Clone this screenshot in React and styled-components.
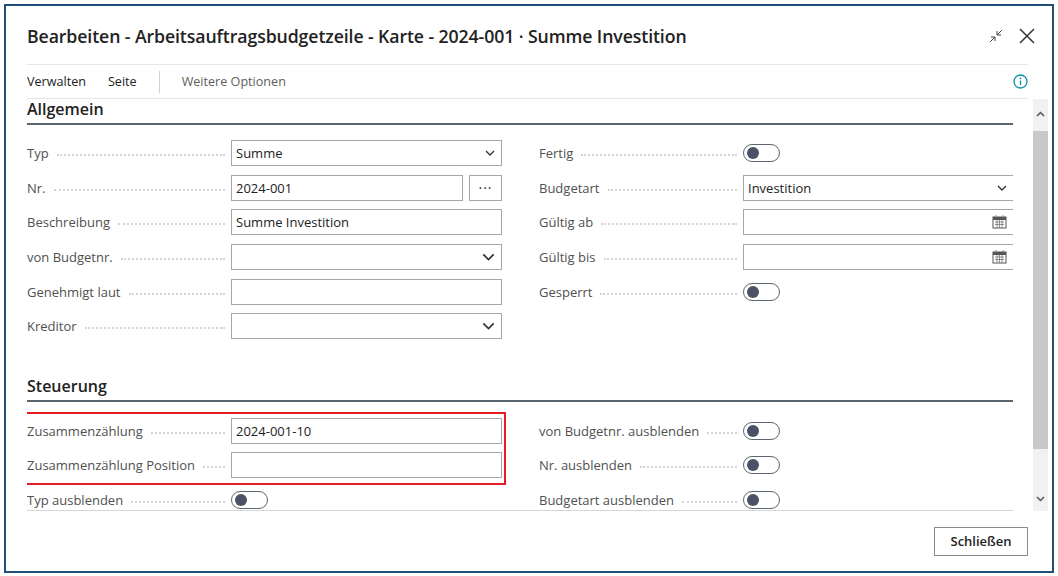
import React from "react";
import styled, { createGlobalStyle } from "styled-components";

const G = createGlobalStyle`
  html,body{margin:0;padding:0;background:#fff;}
  body{font-family:"Segoe UI","Open Sans","Noto Sans",sans-serif;}
`;
const Frame = styled.div`
  box-sizing:border-box;width:1050px;height:569px;margin:4px 0 0 4px;
  border:2px solid #1f4e79;display:flex;flex-direction:column;background:#fff;
`;
const Header = styled.div`
  display:flex;align-items:center;justify-content:space-between;
  height:59px;padding-top:2px;box-sizing:border-box;margin:0 24px 0 21px;border-bottom:1px solid #e6e6e6;
`;
const Title = styled.h1`
  margin:0;font-size:17.7px;font-weight:600;color:#222;letter-spacing:-0.1px;
`;
const Icons = styled.div`display:flex;gap:14px;align-items:center;margin-right:-8px;`;
const Bar = styled.div`
  display:flex;align-items:center;height:33px;margin:0 24px 0 21px;border-bottom:1px solid #e6e6e6;
  font-size:12.6px;color:#222;
`;
const Act = styled.span`margin-right:22px;color:${p=>p.$muted?"#605e5c":"#222"};`;
const Sep = styled.span`width:1px;height:22px;background:#d0d0d0;margin:0 22px 0 0;`;
const Body = styled.div`display:flex;height:412px;`;
const Scroll = styled.div`flex:1;overflow:hidden;padding:0 20px 0 21px;`;
const Clip = styled.div`height:411px;overflow:hidden;border-bottom:1px solid #d6d6d6;`;
const Sb = styled.div`width:15px;margin-right:4px;display:flex;flex-direction:column;align-items:center;background:#f1f1f1;`;
const Thumb = styled.div`width:15px;height:318px;background:#c8c8c8;margin-top:2px;`;
const Arrow = styled.div`height:30px;display:flex;align-items:center;justify-content:center;`;
const Section = styled.h2`
  margin:${p=>p.$top}px 0 0;font-size:16px;font-weight:600;color:#222;
  padding-bottom:3px;border-bottom:2px solid #5c6670;height:21px;line-height:21px;
`;
const Grid = styled.div`display:grid;grid-template-columns:475px 475px;column-gap:37px;padding-top:${p=>p.$pt}px;`;
const Col = styled.div`display:flex;flex-direction:column;`;
const Row = styled.div`display:flex;align-items:center;height:34.6px;`;
const Label = styled.div`
  width:204px;display:flex;align-items:center;font-size:13px;color:#505050;white-space:nowrap;overflow:hidden;
  &::after{content:"";flex:1;margin:4px 6px 0 8px;border-bottom:2px dotted #d4d4d4;height:0;}
`;
const Input = styled.div`
  box-sizing:border-box;height:26px;flex:1;
  border:1px solid #a6a6a6;display:flex;align-items:center;justify-content:space-between;
  padding:0 6px 0 4px;font-size:13px;color:#222;background:#fff;
`;
const Dots = styled.div`
  box-sizing:border-box;width:33px;height:26px;margin-left:6px;border:1px solid #a6a6a6;
  display:flex;align-items:center;justify-content:center;font-size:14px;color:#333;letter-spacing:1px;
`;
const Field = styled.div`display:flex;flex:1;`;
const Toggle = styled.div`
  box-sizing:border-box;width:37px;height:18px;border:1px solid #5c6670;border-radius:9px;
  display:flex;align-items:center;padding-left:3px;
  &::before{content:"";width:12px;height:12px;border-radius:50%;background:#4a5366;}
`;
const Highlight = styled.div`
  margin:-2px -4px -2px -6px;padding:0 2px 0 4px;border:2px solid #e51c23;
`;
const Footer = styled.div`flex:1;display:flex;justify-content:flex-end;align-items:center;padding-right:24px;`;
const Btn = styled.button`
  width:94px;height:29px;background:#fff;border:1px solid #8a8a8a;font:600 13px "Segoe UI","Open Sans",sans-serif;color:#222;
`;

const Chev = ({s=10}) => (
  <svg width={s} height={s*0.6} viewBox="0 0 10 6"><path d="M1 1l4 4 4-4" fill="none" stroke="#333" strokeWidth="1.3"/></svg>
);
const Cal = () => (
  <svg width="15" height="14" viewBox="0 0 15 14"><rect x="1" y="2" width="13" height="11" fill="none" stroke="#555"/><rect x="1" y="2" width="13" height="3" fill="#555"/>
  <path d="M4 0v3M11 0v3M3 7h9M3 9.5h9M5 5v8M7.5 5v8M10 5v8" stroke="#777" strokeWidth="0.8"/></svg>
);
const Sel = ({v, big}) => <Input><span>{v}</span><Chev s={big?13:10}/></Input>;

function R({l, children}){ return <Row><Label>{l}</Label>{children}</Row>; }

export default function App(){
  return (<>
    <G/>
    <Frame>
      <Header>
        <Title>Bearbeiten - Arbeitsauftragsbudgetzeile - Karte - 2024-001 · Summe Investition</Title>
        <Icons>
          <svg width="16" height="16" viewBox="0 0 16 16" fill="none" stroke="#444" strokeWidth="1"><path d="M2 14l5-5M3 9h4v4M14 2l-5 5M9 3v4h4"/></svg>
          <svg width="18" height="18" viewBox="0 0 18 18" stroke="#333" strokeWidth="1.5"><path d="M2 2l14 14M16 2L2 16"/></svg>
        </Icons>
      </Header>
      <Bar>
        <Act>Verwalten</Act><Act>Seite</Act><Sep/><Act $muted>Weitere Optionen</Act>
        <span style={{flex:1}}/>
        <svg width="15" height="15" viewBox="0 0 15 15"><circle cx="7.5" cy="7.5" r="6.5" fill="none" stroke="#0a8fa4" strokeWidth="1.3"/><path d="M7.5 6.5v4.5" stroke="#0a8fa4" strokeWidth="1.3"/><circle cx="7.5" cy="4.3" r="0.9" fill="#0a8fa4"/></svg>
      </Bar>
      <Body>
        <Scroll><Clip>
          <Section $top={0}>Allgemein</Section>
          <Grid $pt={11}>
            <Col>
              <R l="Typ"><Sel v="Summe"/></R>
              <R l="Nr."><Field><Input>2024-001</Input><Dots>···</Dots></Field></R>
              <R l="Beschreibung"><Input>Summe Investition</Input></R>
              <R l="von Budgetnr."><Sel big/></R>
              <R l="Genehmigt laut"><Input/></R>
              <R l="Kreditor"><Sel big/></R>
            </Col>
            <Col>
              <R l="Fertig"><Toggle/></R>
              <R l="Budgetart"><Sel v="Investition"/></R>
              <R l="Gültig ab"><Input><span/><Cal/></Input></R>
              <R l="Gültig bis"><Input><span/><Cal/></Input></R>
              <R l="Gesperrt"><Toggle/></R>
            </Col>
          </Grid>
          <Section $top={32}>Steuerung</Section>
          <Grid $pt={12}>
            <Col>
              <Highlight>
                <R l="Zusammenzählung"><Input>2024-001-10</Input></R>
                <R l="Zusammenzählung Position"><Input/></R>
              </Highlight>
              <R l="Typ ausblenden"><Toggle/></R>
            </Col>
            <Col>
              <R l="von Budgetnr. ausblenden"><Toggle/></R>
              <R l="Nr. ausblenden"><Toggle/></R>
              <R l="Budgetart ausblenden"><Toggle/></R>
            </Col>
          </Grid>
        </Clip></Scroll>
        <Sb>
          <Arrow><svg width="9" height="6" viewBox="0 0 9 6"><path d="M1 5l3.5-3.5L8 5" fill="none" stroke="#555" strokeWidth="1.5"/></svg></Arrow>
          <Thumb/>
          <span style={{flex:1}}/>
          <Arrow style={{height:24}}><svg width="9" height="6" viewBox="0 0 9 6"><path d="M1 1l3.5 3.5L8 1" fill="none" stroke="#555" strokeWidth="1.5"/></svg></Arrow>
        </Sb>
      </Body>
      <Footer><Btn>Schließen</Btn></Footer>
    </Frame>
  </>);
}
